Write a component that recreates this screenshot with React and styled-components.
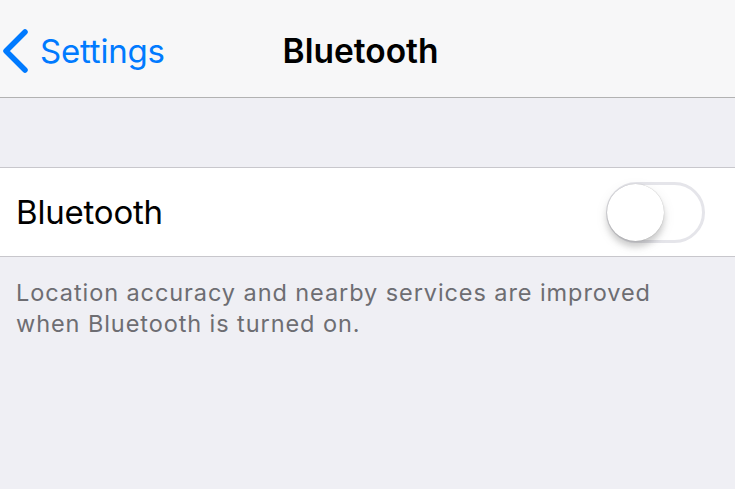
import React from "react";
import styled, { createGlobalStyle } from "styled-components";

const Global = createGlobalStyle`
  html, body { margin: 0; padding: 0; background: #efeff4; }
  body { font-family: Inter, "Noto Sans", sans-serif; -webkit-font-smoothing: antialiased; }
`;

const Page = styled.div`
  width: 735px;
  height: 489px;
  background: #efeff4;
  overflow: hidden;
`;

const NavBar = styled.header`
  background: #f7f7f8;
  border-bottom: 1px solid #b2b2b2;
  display: grid;
  grid-template-columns: 1fr auto 1fr;
  align-items: center;
  padding: 4px 14px 0 0;
  height: 93px;
`;

const BackButton = styled.div`
  display: flex;
  align-items: center;
  gap: 11px;
  padding-left: 1px;
  color: #007aff;
  font-size: 33px;
  letter-spacing: -0.2px;
`;

const Title = styled.h1`
  margin: 0;
  font-size: 33.5px;
  font-weight: 600;
  color: #000;
  letter-spacing: 0px;
`;

const Spacer = styled.div`
  height: 69px;
`;

const Group = styled.section`
  background: #fff;
  border-top: 1px solid #c8c7cc;
  border-bottom: 1px solid #c8c7cc;
`;

const Row = styled.div`
  height: 88px;
  display: flex;
  align-items: center;
  justify-content: space-between;
  padding: 0 30px 0 16px;
`;

const Label = styled.span`
  font-size: 33px;
  color: #000;
  letter-spacing: -0.2px;
`;

const Track = styled.div`
  position: relative;
  width: 99px;
  height: 61px;
  border-radius: 31px;
  box-sizing: border-box;
  border: 3px solid #e5e5ea;
  background: #fff;
`;

const Knob = styled.div`
  position: absolute;
  left: -2px;
  top: -1px;
  width: 57px;
  height: 57px;
  border-radius: 50%;
  background: #fff;
  box-shadow: 0 6px 6px rgba(0, 0, 0, 0.16), 0 0 1px rgba(0, 0, 0, 0.3), 0 4px 14px rgba(0,0,0,0.08);
`;

const Footer = styled.p`
  margin: 0;
  padding: 20px 16px 0;
  font-size: 23.5px;
  line-height: 31px;
  letter-spacing: 0.92px;
  color: #6d6d72;
`;

function Chevron() {
  return (
    <svg width="28" height="46" viewBox="0 0 28 46" aria-hidden="true">
      <path d="M24 4 L5 23 L24 42" fill="none" stroke="#007aff" strokeWidth="5.5" strokeLinecap="round" strokeLinejoin="round" />
    </svg>
  );
}

export default function App() {
  return (
    <Page>
      <Global />
      <NavBar>
        <BackButton>
          <Chevron />
          <span>Settings</span>
        </BackButton>
        <Title>Bluetooth</Title>
        <div />
      </NavBar>
      <Spacer />
      <Group>
        <Row>
          <Label>Bluetooth</Label>
          <Track>
            <Knob />
          </Track>
        </Row>
      </Group>
      <Footer>
        Location accuracy and nearby services are improved
        <br />
        when Bluetooth is turned on.
      </Footer>
    </Page>
  );
}
